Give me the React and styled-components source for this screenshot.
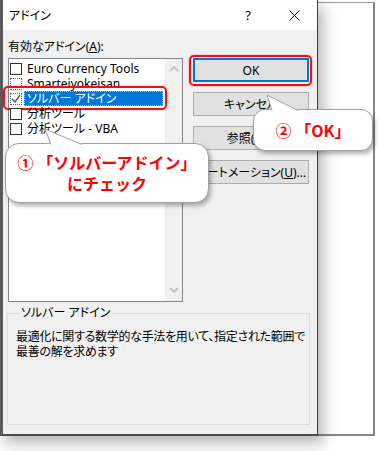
import React from 'react';
import styled, { createGlobalStyle } from 'styled-components';

const GlobalStyle = createGlobalStyle`
  html, body { margin: 0; padding: 0; background: #fff; }
  body {
    font-family: "Noto Sans", "Noto Sans CJK JP", sans-serif;
    font-size: 12px;
    color: #000;
    font-feature-settings: "palt";
  }
  * { box-sizing: border-box; }
`;

const Stage = styled.div`
  position: relative;
  width: 392px;
  height: 451px;
  display: flex;
  align-items: flex-start;
  overflow: hidden;
`;

const Dialog = styled.div`
  position: relative;
  z-index: 1;
  width: 318px;
  height: 436px;
  background: #f0f0f0;
  border-left: 3px solid #5a5a5a;
  border-right: 1px solid #3c3c3c;
  border-bottom: 2px solid #4a4a4a;
  box-shadow: 5px 7px 14px rgba(0, 0, 0, 0.3);
  display: flex;
  flex-direction: column;
`;

const BackWindow = styled.div`
  width: 57px;
  height: 434px;
  margin-top: 2px;
  background: #fff;
  border-top: 1px solid #9a9a9a;
  border-right: 2px solid #858585;
  border-bottom: 2px solid #858585;
`;

const TitleBar = styled.div`
  height: 30px;
  background: #fff;
  display: flex;
  align-items: center;
  padding-left: 6px;
`;

const TitleText = styled.div`
  flex: 1;
  font-size: 12px;
`;

const TitleButton = styled.div`
  width: 46px;
  height: 30px;
  display: flex;
  align-items: center;
  justify-content: center;
  font-size: 13px;
`;

const Body = styled.div`
  flex: 1;
  padding: 9px 0 0 5px;
`;

const MainGrid = styled.div`
  display: grid;
  grid-template-columns: 175px 116px;
  column-gap: 10px;
  row-gap: 3px;
`;

const FieldLabel = styled.div`
  grid-column: 1 / 3;
  line-height: 16px;
  u { text-decoration: underline; }
`;

const ListBox = styled.div`
  height: 244px;
  border: 1px solid #828790;
  background: #fff;
  display: flex;
`;

const Items = styled.div`
  flex: 1;
  padding-top: 2px;
`;

const Row = styled.div`
  position: relative;
  display: flex;
  align-items: center;
  height: 15px;
  padding-left: 1px;
`;

const Check = styled.div`
  width: 12px;
  height: 12px;
  border: 1px solid ${p => (p.$focus ? '#666' : '#333')};
  border-style: ${p => (p.$focus ? 'dotted' : 'solid')};
  background: #fff;
  display: flex;
  align-items: center;
  justify-content: center;
`;

const ItemText = styled.div`
  flex: 1;
  margin: 0 2px 0 2px;
  padding-left: 2px;
  height: 15px;
  line-height: 14px;
  white-space: nowrap;
  background: ${p => (p.$selected ? '#0078d7' : 'transparent')};
  color: ${p => (p.$selected ? '#fff' : '#000')};
  border: 1px dotted ${p => (p.$selected ? '#f0b060' : 'transparent')};
`;

const RedMark = styled.div`
  position: absolute;
  left: -6px;
  right: -2px;
  top: -5px;
  bottom: -4px;
  border: 2px solid #f01010;
  border-radius: 5px;
  box-shadow: 0 0 2px rgba(255, 0, 0, 0.45);
  pointer-events: none;
`;

const ScrollBar = styled.div`
  width: 17px;
  background: #f0f0f0;
  display: flex;
  flex-direction: column;
  justify-content: space-between;
  align-items: center;
  padding: 7px 0 8px;
`;

const Buttons = styled.div`
  display: flex;
  flex-direction: column;
  gap: 10px;
`;

const Button = styled.div`
  position: relative;
  height: 24px;
  background: #e1e1e1;
  border: ${p => (p.$default ? '2px solid #0078d7' : '1px solid #adadad')};
  display: flex;
  align-items: center;
  justify-content: center;
  white-space: nowrap;
  u { text-decoration: underline; }
`;

const ButtonMark = styled.div`
  position: absolute;
  left: -6px;
  right: -5px;
  top: -5px;
  bottom: -6px;
  border: 2px solid #f01010;
  border-radius: 5px;
  box-shadow: 0 0 2px rgba(255, 0, 0, 0.45);
`;

const GroupBox = styled.fieldset`
  margin: 3px 0 0 -1px;
  width: 303px;
  height: 120px;
  border: 1px solid #dcdcdc;
  padding: 8px 8px 0 8px;
  min-width: 0;
`;

const Legend = styled.legend`
  margin-left: 4px;
  padding: 0 1px;
  line-height: 16px;
  font-size: 12px;
`;

const Description = styled.div`
  line-height: 15px;
  white-space: nowrap;
  letter-spacing: -0.3px;
`;

const Bubble = styled.div`
  position: absolute;
  z-index: 3;
  left: ${p => p.$x}px;
  top: ${p => p.$y}px;
  width: ${p => p.$w}px;
  height: ${p => p.$h}px;
  background: #fff;
  border: 1px solid #a0a0a0;
  border-radius: ${p => p.$r}px;
  box-shadow: 2px 3px 4px rgba(0, 0, 0, 0.3);
  display: flex;
  flex-direction: column;
  align-items: center;
  justify-content: center;
  color: #ff0000;
  font-family: "Noto Sans CJK JP", sans-serif;
  font-feature-settings: normal;
  font-weight: 700;
  font-size: 16px;
  line-height: 21px;
`;

const Tail = styled.svg`
  position: absolute;
  left: 0;
  top: -16px;
  overflow: visible;
`;

function CheckMark() {
  return (
    <svg width="10" height="10" viewBox="0 0 10 10">
      <polyline points="1,5 4,8 9,1" fill="none" stroke="#555" strokeWidth="1.4" />
    </svg>
  );
}

function Chevron({ down }) {
  return (
    <svg width="10" height="6" viewBox="0 0 10 6">
      <polyline
        points={down ? '1,1 5,5 9,1' : '1,5 5,1 9,5'}
        fill="none"
        stroke="#c4c4c4"
        strokeWidth="2"
      />
    </svg>
  );
}

const items = [
  { label: 'Euro Currency Tools' },
  { label: 'Smarteiyokeisan', focus: true },
  { label: 'ソルバー アドイン', checked: true, selected: true },
  { label: '分析ツール' },
  { label: '分析ツール - VBA' },
];

export default function App() {
  return (
    <>
      <GlobalStyle />
      <Stage>
        <Dialog>
          <TitleBar>
            <TitleText>アドイン</TitleText>
            <TitleButton>?</TitleButton>
            <TitleButton>
              <svg width="11" height="11" viewBox="0 0 11 11">
                <path d="M0.5 0.5 L10.5 10.5 M10.5 0.5 L0.5 10.5" stroke="#000" strokeWidth="1" />
              </svg>
            </TitleButton>
          </TitleBar>
          <Body>
            <MainGrid>
              <FieldLabel>有効なアドイン(<u>A</u>):</FieldLabel>
              <ListBox>
                <Items>
                  {items.map(it => (
                    <Row key={it.label}>
                      <Check $focus={it.focus || it.selected}>{it.checked && <CheckMark />}</Check>
                      <ItemText $selected={it.selected}>{it.label}</ItemText>
                      {it.selected && <RedMark />}
                    </Row>
                  ))}
                </Items>
                <ScrollBar>
                  <Chevron />
                  <Chevron down />
                </ScrollBar>
              </ListBox>
              <Buttons>
                <Button $default>
                  OK
                  <ButtonMark />
                </Button>
                <Button>キャンセル</Button>
                <Button>参照(<u>B</u>)...</Button>
                <Button>オートメーション(<u>U</u>)...</Button>
              </Buttons>
            </MainGrid>
            <GroupBox>
              <Legend>ソルバー アドイン</Legend>
              <Description>
                最適化に関する数学的な手法を用いて、指定された範囲で
                <br />
                最善の解を求めます
              </Description>
            </GroupBox>
          </Body>
        </Dialog>
        <BackWindow />

        <Bubble $x={5} $y={143} $w={204} $h={60} $r={14}>
          <Tail width="40" height="16">
            <polygon points="45,16 39,1 76,16" fill="#fff" />
            <polyline points="45,16.5 39,1 76,16.5" fill="none" stroke="#a0a0a0" strokeWidth="1" />
          </Tail>
          <div>① 「ソルバーアドイン」</div>
          <div>にチェック</div>
        </Bubble>

        <Bubble $x={253} $y={109} $w={120} $h={42} $r={12}>
          <Tail width="40" height="16">
            <polygon points="18,16 13,1 44,16" fill="#fff" />
            <polyline points="18,16.5 13,1 44,16.5" fill="none" stroke="#a0a0a0" strokeWidth="1" />
          </Tail>
          <div>② 「OK」</div>
        </Bubble>
      </Stage>
    </>
  );
}
